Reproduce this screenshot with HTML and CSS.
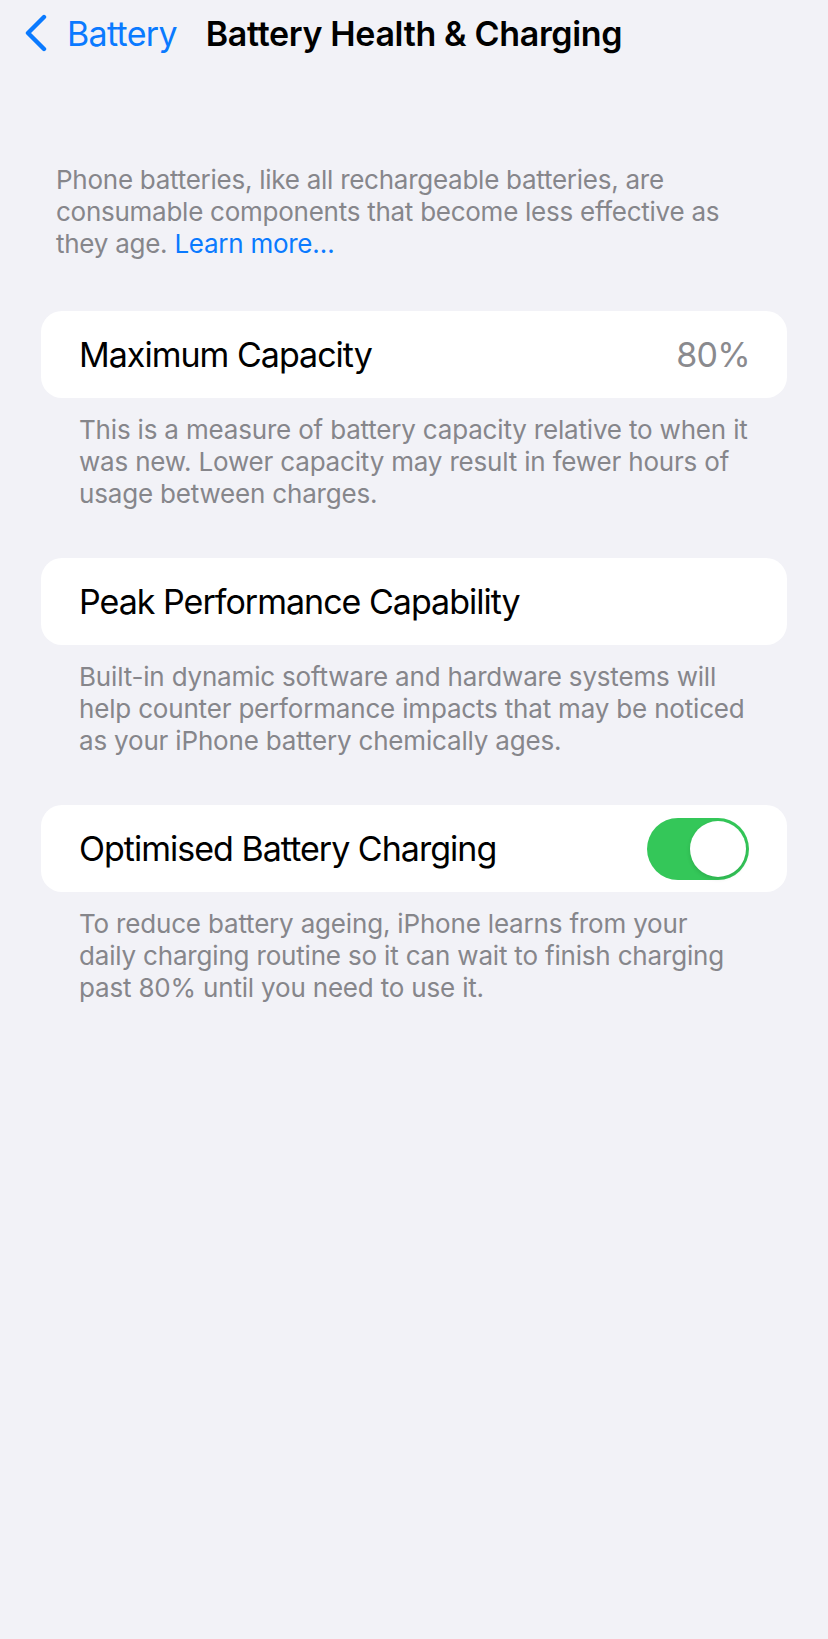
FILE: index.html
```html
<!DOCTYPE html>
<html lang="en">
<head>
    <meta charset="UTF-8">
    <meta name="viewport" content="width=device-width, initial-scale=1.0">
    <title>Battery Health &amp; Charging</title>
    <link rel="stylesheet" href="styles.css">
</head>
<body>
    <header class="nav-bar">
        <a class="back-link" href="#">
            <svg class="chevron" width="24" height="38" viewBox="0 0 24 38">
                <path d="M20 3 L4 19 L20 35" fill="none" stroke="currentColor" stroke-width="4.4" stroke-linecap="round" stroke-linejoin="round"/>
            </svg>
            <span>Battery</span>
        </a>
        <h1 class="nav-title">Battery Health &amp; Charging</h1>
        <div></div>
    </header>

    <main class="content">
        <p class="intro">Phone batteries, like all rechargeable batteries, are consumable components that become less effective as they age. <a href="#" class="link">Learn more…</a></p>

        <section class="group">
            <div class="card">
                <span class="row-label">Maximum Capacity</span>
                <span class="row-value">80%</span>
            </div>
            <p class="footer">This is a measure of battery capacity relative to when it was new. Lower capacity may result in fewer hours of usage between charges.</p>
        </section>

        <section class="group">
            <div class="card">
                <span class="row-label">Peak Performance Capability</span>
            </div>
            <p class="footer">Built-in dynamic software and hardware systems will help counter performance impacts that may be noticed as your iPhone battery chemically ages.</p>
        </section>

        <section class="group">
            <div class="card">
                <span class="row-label">Optimised Battery Charging</span>
                <label class="switch">
                    <input type="checkbox" checked>
                    <span class="track"><span class="knob"></span></span>
                </label>
            </div>
            <p class="footer">To reduce battery ageing, iPhone learns from your daily charging routine so it can wait to finish charging past 80% until you need to use it.</p>
        </section>
    </main>
</body>
</html>
```

FILE: styles.css
```css
body {
    margin: 0;
    min-height: 1639px;
    background-color: #f2f2f7;
    font-family: Inter, "Noto Sans", sans-serif;
    color: #000;
}
a {
    text-decoration: none;
}
.nav-bar {
    display: grid;
    grid-template-columns: 1fr auto 1fr;
    align-items: center;
    height: 66px;
}
.back-link {
    display: flex;
    align-items: center;
    gap: 19px;
    margin-left: 24px;
    color: #0a7aff;
    font-size: 34px;
    letter-spacing: -0.02em;
}
.chevron {
    display: block;
}
.nav-title {
    margin: 0;
    font-size: 34px;
    font-weight: 600;
    letter-spacing: -0.01em;
}
.content {
    padding: 98px 41px 0;
}
.intro {
    margin: 0 0 51px;
    padding: 0 15px;
    font-size: 26px;
    line-height: 32px;
    color: #86868b;
    letter-spacing: -0.01em;
}
.link {
    color: #0a7aff;
}
.group {
    margin-bottom: 48px;
}
.card {
    display: flex;
    align-items: center;
    justify-content: space-between;
    height: 87px;
    padding: 0 37px 0 38px;
    background-color: #fff;
    border-radius: 21px;
}
.row-label {
    font-size: 34px;
    letter-spacing: -0.029em;
}
.row-value {
    font-size: 34px;
    color: #8a8a8e;
    letter-spacing: -0.02em;
}
.footer {
    margin: 16px 0 0;
    padding: 0 38px;
    font-size: 26px;
    line-height: 32px;
    color: #86868b;
    letter-spacing: -0.007em;
}
.switch {
    display: block;
    margin-right: 1px;
}
.switch input {
    display: none;
}
.track {
    display: flex;
    align-items: center;
    justify-content: flex-end;
    width: 102px;
    height: 62px;
    padding: 0 3px;
    box-sizing: border-box;
    border-radius: 31px;
    background-color: #34c759;
}
.knob {
    width: 56px;
    height: 56px;
    border-radius: 50%;
    background-color: #fff;
    box-shadow: 0 2px 4px rgba(0, 0, 0, 0.12);
}
```
